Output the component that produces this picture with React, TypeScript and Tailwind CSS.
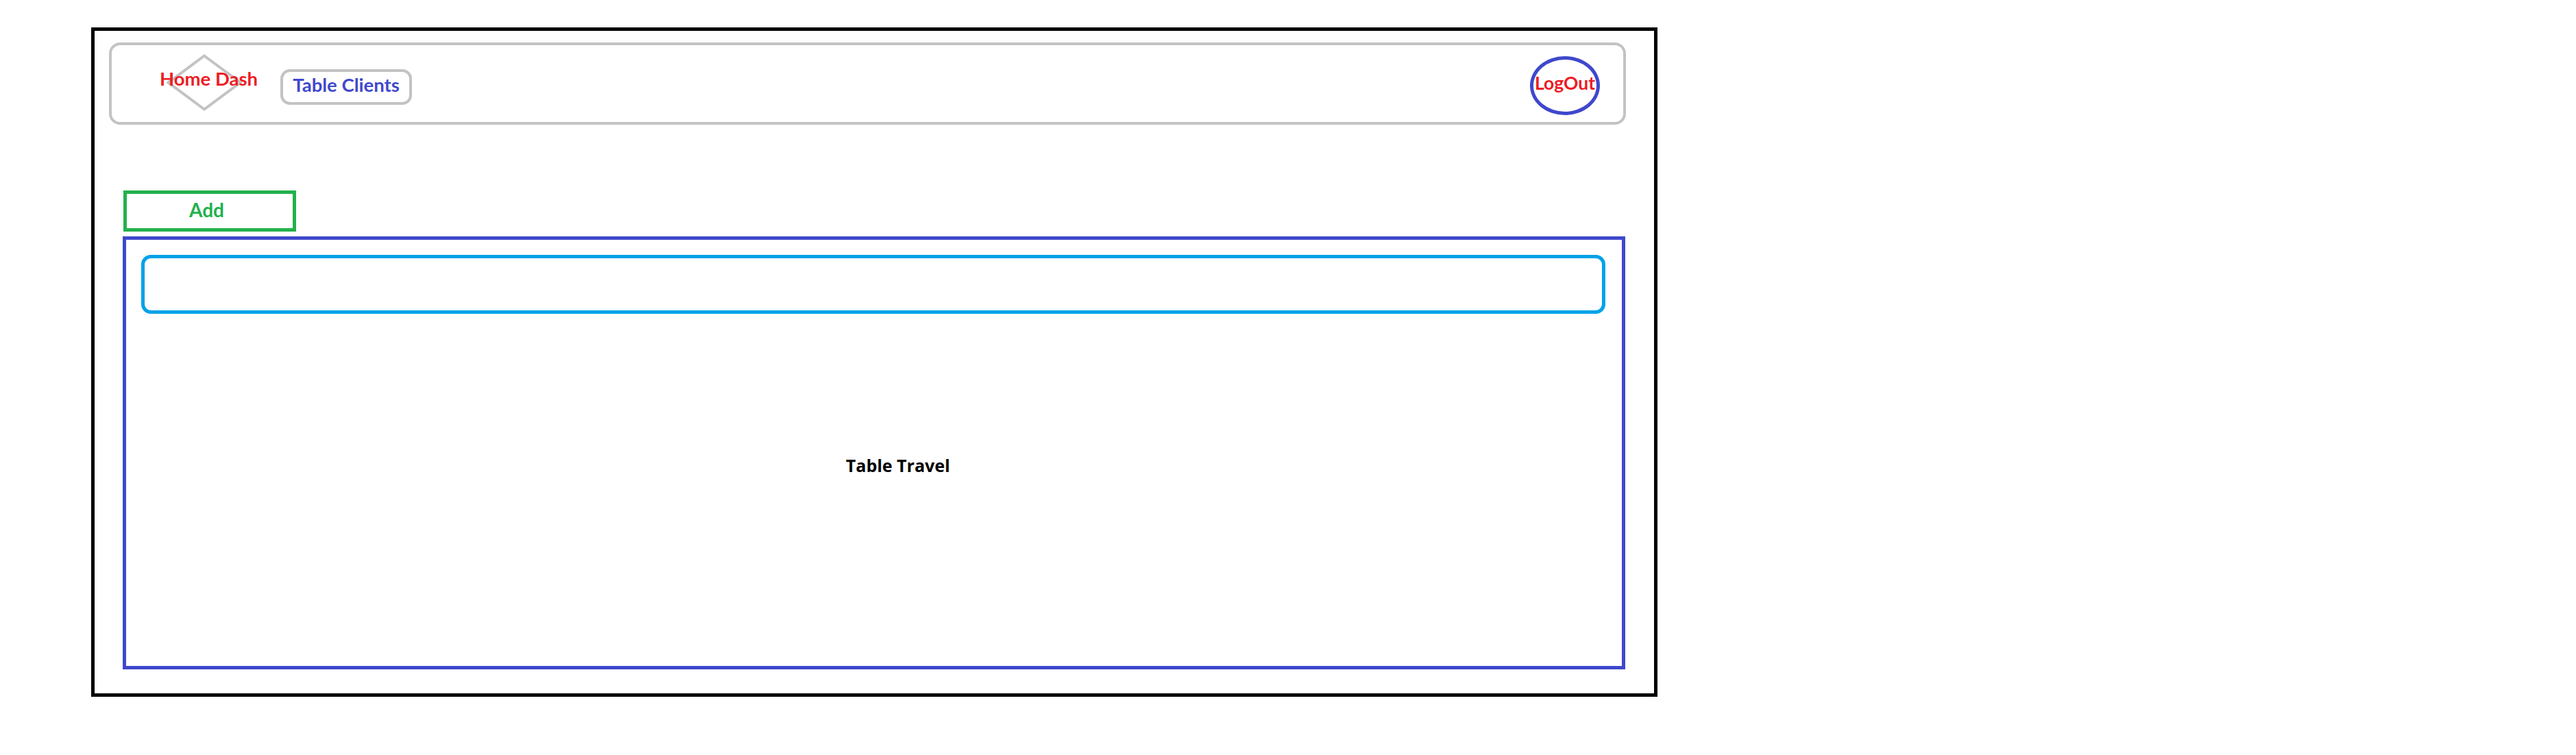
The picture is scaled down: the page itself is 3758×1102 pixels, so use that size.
import React from 'react';

const lato = "font-['Lato','Open_Sans',sans-serif]";

export default function App() {
  return (
    <div className="w-[3758px] h-[1102px] bg-white pt-[40px] pl-[133px]">
      <div className="w-[2285px] h-[977px] border-[5px] border-black pt-[17px]">
        {/* Header bar */}
        <nav className="ml-[21px] w-[2213px] h-[120px] border-[4px] border-[#c3c3c3] rounded-[16px] flex items-start">
          <div className="relative ml-[80px] mt-[13px] w-[110px] h-[83px]">
            <svg width="110" height="83" viewBox="0 0 110 83">
              <polygon points="55,2.5 107.5,41.5 55,80.5 2.5,41.5" fill="none" stroke="#c3c3c3" strokeWidth="4" />
            </svg>
            <div className="absolute inset-0 flex items-center justify-center pb-[12px] pl-[13px]">
              <span className={`block whitespace-nowrap ${lato} font-bold text-[27.5px] leading-none text-[#ed1c24]`}>
                Home Dash
              </span>
            </div>
          </div>

          <div className="ml-[56px] mt-[35px] w-[192px] h-[52px] border-[4px] border-[#c3c3c3] rounded-[14px] flex items-center justify-center pb-[6px]">
            <span className={`block whitespace-nowrap ${lato} font-bold text-[27.5px] leading-none text-[#3f48cc]`}>
              Table Clients
            </span>
          </div>

          <div className="ml-auto mr-[34px] mt-[16px] w-[102px] h-[86px] border-[5px] border-[#3f48cc] rounded-[50%] flex items-center justify-center pb-[7px]">
            <span className={`block whitespace-nowrap ${lato} font-bold text-[26.5px] leading-none text-[#ed1c24]`}>
              LogOut
            </span>
          </div>
        </nav>

        <div className="ml-[42px] mt-[96px] w-[252px] h-[60px] border-[5px] border-[#22b14c] flex items-center justify-center pr-[9px] pb-[4px]">
          <span className={`block whitespace-nowrap ${lato} font-bold text-[28px] leading-none text-[#22b14c]`}>
            Add
          </span>
        </div>

        {/* Travel table */}
        <div className="ml-[41px] mt-[7px] w-[2192px] h-[632px] border-[5px] border-[#3f48cc] pt-[22px] pl-[22px]">
          <div className="w-[2136px] h-[86px] border-[5px] border-[#00a2e8] rounded-[14px]" />
          <div className="mt-[209px] flex justify-center pl-[48px]">
            <span className="block whitespace-nowrap font-['Open_Sans','Lato',sans-serif] font-bold text-[25px] leading-none text-black">
              Table Travel
            </span>
          </div>
        </div>
      </div>
    </div>
  );
}
